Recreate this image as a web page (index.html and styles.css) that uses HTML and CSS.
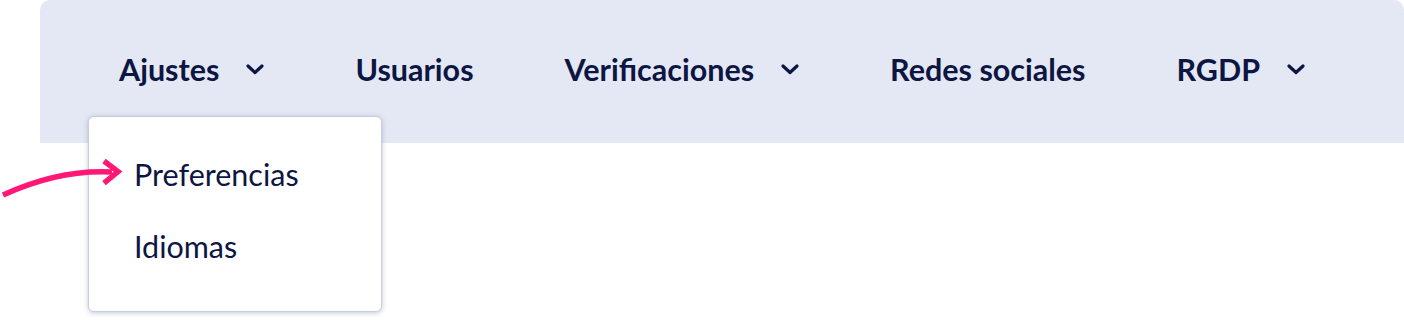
FILE: index.html
```html
<!DOCTYPE html>
<html lang="es">
<head>
    <meta charset="UTF-8">
    <title>Menú</title>
    <link rel="stylesheet" href="styles.css">
</head>
<body>
    <nav class="navbar">
        <ul class="nav_list">
            <li class="nav_item">
                <span>Ajustes</span>
                <svg class="chevron" width="18" height="12" viewBox="0 0 18 12"><path d="M2 3 L9 9.5 L16 3" /></svg>
            </li>
            <li class="nav_item"><span>Usuarios</span></li>
            <li class="nav_item">
                <span>Verificaciones</span>
                <svg class="chevron" width="18" height="12" viewBox="0 0 18 12"><path d="M2 3 L9 9.5 L16 3" /></svg>
            </li>
            <li class="nav_item"><span>Redes sociales</span></li>
            <li class="nav_item">
                <span>RGDP</span>
                <svg class="chevron" width="18" height="12" viewBox="0 0 18 12"><path d="M2 3 L9 9.5 L16 3" /></svg>
            </li>
        </ul>
    </nav>

    <!-- dropdown abierto de Ajustes -->
    <div class="dropdown">
        <a class="dropdown_link">Preferencias</a>
        <a class="dropdown_link">Idiomas</a>
    </div>

    <svg class="pointer" width="130" height="50" viewBox="0 0 130 50">
        <path d="M3 47 C40 30 75 22 112 24" />
        <path d="M104 13 L118 23.5 L104 35" />
    </svg>
</body>
</html>
```

FILE: styles.css
```css
body{
    margin: 0;
    font-family: Lato, "Open Sans", sans-serif;
    color: #0d1642;
    background: #fff;
    min-height: 321px;
    position: relative;
}
.navbar{
    margin-left: 40px;
    height: 143px;
    background-color: #e4e8f4;
    border-radius: 10px 10px 0 0;
}
.nav_list{
    list-style: none;
    margin: 0;
    padding: 0 0 0 79px;
    display: flex;
    gap: 91px;
    height: 137px;
    align-items: center;
}
.nav_item{
    display: flex;
    align-items: center;
    gap: 27px;
    font-size: 30.5px;
    font-weight: 700;
}
.chevron path{
    fill: none;
    stroke: #0d1642;
    stroke-width: 3.2;
    stroke-linecap: round;
    stroke-linejoin: round;
}
.dropdown{
    position: absolute;
    z-index: 10;
    top: 116px;
    left: 88px;
    width: 294px;
    height: 196px;
    box-sizing: border-box;
    padding: 38px 0 0 45px;
    background: #fff;
    border: 1px solid #c9cede;
    border-radius: 6px;
    box-shadow: 0 1px 5px rgba(60, 70, 120, 0.3);
    display: flex;
    flex-direction: column;
    gap: 34px;
}
.dropdown_link{
    font-size: 30.5px;
    font-weight: 400;
    line-height: 38px;
}
.pointer{
    position: absolute;
    z-index: 11;
    left: 0;
    top: 148px;
}
.pointer path{
    fill: none;
    stroke: #ff1875;
    stroke-width: 5.5;
}
```
